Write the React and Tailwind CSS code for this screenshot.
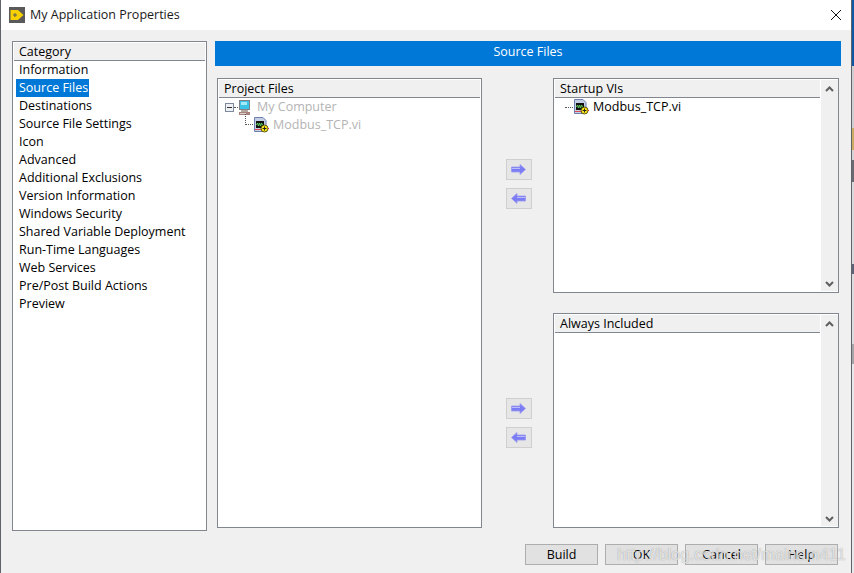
const categories = [
  "Information",
  "Source Files",
  "Destinations",
  "Source File Settings",
  "Icon",
  "Advanced",
  "Additional Exclusions",
  "Version Information",
  "Windows Security",
  "Shared Variable Deployment",
  "Run-Time Languages",
  "Web Services",
  "Pre/Post Build Actions",
  "Preview",
];

function ViIcon() {
  return (
    <svg width="16" height="16" viewBox="0 0 16 16" className="shrink-0">
      <path d="M1.5 .5H10L13 3.5V14.5H1.5Z" fill="#c4cfe6" stroke="#6c7fae" />
      <rect x="3" y="4" width="8" height="7" fill="#111" />
      <path d="M3.5 8l1-2 1 3 1-3 1 3 1-3 1 2" fill="none" stroke="#5fd35f" strokeWidth="1" />
      <rect x="2" y="12" width="8" height="1" fill="#e04a4a" />
      <circle cx="11.5" cy="11.5" r="3.5" fill="#ffe81a" stroke="#3a3200" strokeWidth=".8" />
      <path d="M9.5 11.5h4M11.5 9.5v4" stroke="#222" strokeWidth="1" />
      <path d="M15 11h1v1h-1z" fill="#e02020" />
    </svg>
  );
}

function ComputerIcon() {
  return (
    <svg width="14" height="15" viewBox="0 0 14 15" className="shrink-0">
      <rect x="1" y="0" width="11" height="10" fill="#7f8088" />
      <rect x="2" y="1" width="9" height="8" fill="#3cc3e8" />
      <path d="M3 2h6v3H3z" fill="#a6e8f6" />
      <rect x="3" y="10" width="7" height="2" fill="#b4a8a0" />
      <rect x="1" y="12" width="11" height="3" fill="#a8807c" />
      <rect x="2" y="13" width="6" height="1" fill="#d9d2cc" />
    </svg>
  );
}

function Chevron({ up }) {
  return (
    <svg width="9" height="7" viewBox="0 0 9 7">
      <path d={up ? "M1 6L4.5 2.5L8 6" : "M1 1L4.5 4.5L8 1"} fill="none" stroke="#606060" strokeWidth="2" />
    </svg>
  );
}

function Arrow({ left }) {
  return (
    <button className="w-[26px] h-[21px] flex items-center justify-center border border-[#cfcfcf] bg-[#e6e6e6]">
      <svg width="15" height="11" viewBox="0 0 15 11">
        <path
          d={left ? "M0.5 5.5L6 .5V3H14.5V8H6V10.5Z" : "M14.5 5.5L9 .5V3H.5V8H9V10.5Z"}
          fill="#7c7cf4"
          stroke="#9a9af0"
          strokeWidth=".8"
        />
        <rect x={left ? 6 : 1} y="4" width="8" height="1" fill="#bcbcfa" />
      </svg>
    </button>
  );
}

function ArrowPair() {
  return (
    <div className="flex flex-col gap-2">
      <Arrow />
      <Arrow left />
    </div>
  );
}

function ListPanel({ title, children, className }) {
  return (
    <div className={`flex border border-[#82878f] bg-white pt-px pb-px pl-px ${className}`}>
      <div className="flex-1 min-w-0 flex flex-col">
        <div className="h-[18px] pl-[5px] bg-[#f0f0f0] border-b border-[#82878f] text-[12.5px] leading-[17px] text-black">
          {title}
        </div>
        {children}
      </div>
      <div className="w-[17px] bg-[#f0f0f0] ml-px flex flex-col justify-between items-center pt-[5px] pb-[3px]">
        <Chevron up />
        <Chevron />
      </div>
    </div>
  );
}

function FootButton({ label }) {
  return (
    <button className="w-[73px] h-[21px] border border-[#adadad] bg-[#e1e1e1] text-[12.5px] leading-[17px] text-black">
      {label}
    </button>
  );
}

export default function App() {
  return (
    <div className="relative w-[854px] h-[573px] flex overflow-hidden bg-[#f0f0f0] font-['Open_Sans','Noto_Sans',sans-serif]">
      <div className="w-[851px] flex flex-col border-l border-[#5f6368]">
        {/* title bar */}
        <div className="h-[30px] bg-white flex items-center pl-2 pr-[9px]">
          <svg width="16" height="16" viewBox="0 0 16 16">
            <rect width="16" height="16" fill="#5a5a5a" />
            <path d="M1.5 3H9L14.5 8L9 13H1.5Z" fill="#f6d000" />
            <path d="M4 8h4M6 6v4" stroke="#5a5a5a" strokeWidth="1" />
          </svg>
          <span className="ml-[5px] text-[12.5px] text-[#1a1a1a]">My Application Properties</span>
          <svg width="12" height="12" viewBox="0 0 12 12" className="ml-auto">
            <path d="M1 1L11 11M11 1L1 11" stroke="#111" strokeWidth="1" />
          </svg>
        </div>

        <div className="flex-1 flex pt-[11px] pl-[11px] gap-2">
          {/* category list */}
          <div className="w-[195px] h-[490px] border border-[#82878f] bg-white p-px">
            <div className="h-[18px] pl-[5px] bg-[#f0f0f0] border-b border-[#82878f] text-[12.5px] leading-[17px] text-black">
              Category
            </div>
            <div className="pl-0.5">
              {categories.map((c) => (
                <div key={c} className="h-[18px] text-[12.5px] leading-[18px] text-black">
                  <span className={c === "Source Files" ? "inline-block h-[18px] pl-[3px] pr-px bg-[#0078d7] text-white" : "inline-block px-[3px]"}>
                    {c}
                  </span>
                </div>
              ))}
            </div>
          </div>

          <div className="w-[626px] flex flex-col">
            <div className="h-[25px] bg-[#0078d7] text-white text-[12.5px] leading-[21px] text-center">Source Files</div>

            <div className="mt-3 ml-0.5 flex">
              <div className="w-[265px] h-[450px] border border-[#82878f] bg-white p-px">
                <div className="h-[18px] pl-[5px] bg-[#f0f0f0] border-b border-[#82878f] text-[12.5px] leading-[17px] text-black">
                  Project Files
                </div>
                <div className="flex items-center h-[18px] pl-[6px] text-[12.5px] text-[#b4b4b4]">
                  <span className="w-[9px] h-[9px] border border-[#7d8a9c] bg-[#eef0f4] flex items-center justify-center">
                    <span className="w-[5px] h-px bg-[#333]" />
                  </span>
                  <span className="w-[4px] border-t border-dotted border-[#555]" />
                  <ComputerIcon />
                  <span className="ml-[5px]">My Computer</span>
                </div>
                <div className="flex items-center h-[18px] pl-[26px] text-[12.5px] text-[#b4b4b4]">
                  <span className="w-[8px] h-[11px] -mt-[11px] border-l border-b border-dotted border-[#555]" />
                  <ViIcon />
                  <span className="ml-[4px]">Modbus_TCP.vi</span>
                </div>
              </div>

              <div className="w-[71px] flex flex-col items-center pl-[2px] pt-[81px]">
                <ArrowPair />
                <div className="mt-[189px]">
                  <ArrowPair />
                </div>
              </div>

              <div className="w-[286px] flex flex-col gap-5">
                <ListPanel title="Startup VIs" className="h-[215px]">
                  <div className="flex items-center h-[18px] pl-[10px] text-[12.5px] text-black">
                    <span className="w-[8px] border-t border-dotted border-[#555]" />
                    <ViIcon />
                    <span className="ml-[4px]">Modbus_TCP.vi</span>
                  </div>
                </ListPanel>
                <ListPanel title="Always Included" className="h-[215px]" />
              </div>
            </div>

            <div className="mt-4 mr-[3px] flex justify-end gap-[7px]">
              <FootButton label="Build" />
              <FootButton label="OK" />
              <FootButton label="Cancel" />
              <FootButton label="Help" />
            </div>
          </div>
        </div>
      </div>

      {/* sliver of the desktop behind the dialog */}
      <div className="w-[3px] flex flex-col border-l border-[#5f6368]">
        <div className="h-[66px] bg-[#0c5aa6]" />
        <div className="h-[62px] bg-[#cfcfcf]" />
        <div className="h-[22px] bg-[#c9ae60]" />
        <div className="h-[10px] bg-[#d4d4d4]" />
        <div className="h-[22px] bg-[#6a6a72]" />
        <div className="h-[82px] bg-[#dadada]" />
        <div className="h-[10px] bg-[#5d6478]" />
        <div className="h-[70px] bg-[#dcdcdc]" />
        <div className="h-[20px] bg-[#a6a6a6]" />
        <div className="flex-1 bg-[#e8e8e8]" />
      </div>

      {/* blog watermark */}
      <div className="absolute left-[617px] top-[542px] text-[16.5px] leading-[24px] whitespace-nowrap text-white/70 font-['Liberation_Sans',sans-serif] [text-shadow:0_0_1px_rgba(110,110,110,0.7)]">
        http://blog.csdn.net/mainam411
      </div>
    </div>
  );
}
